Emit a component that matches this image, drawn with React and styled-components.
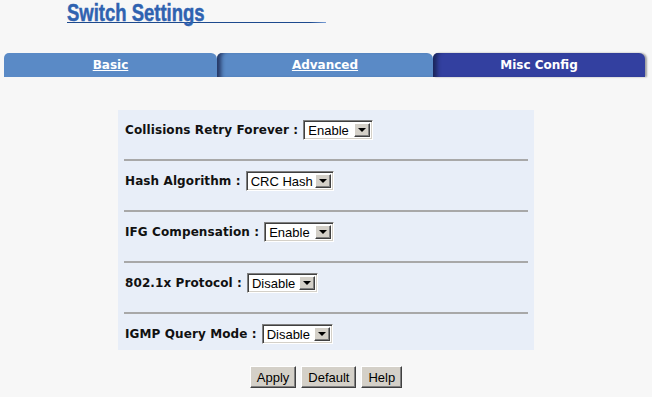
import React from "react";
import styled, { createGlobalStyle } from "styled-components";

const GlobalStyle = createGlobalStyle`
  body {
    margin: 0;
    background: #f7f7f7;
  }
`;

const Page = styled.div`
  width: 652px;
  padding-top: 2px;
`;

const TitleWrap = styled.div`
  margin-left: 67px;
  width: 259px;
  height: 21px;
  background: linear-gradient(to right, #1d4a8e 0%, #1d4a8e 94%, #7a9fd8 100%) bottom / 100% 1px no-repeat;
`;

const Title = styled.h1`
  margin: 0;
  font-family: "Liberation Sans", Arial, sans-serif;
  font-weight: bold;
  font-size: 24px;
  line-height: 21px;
  color: #2f62b0;
  transform: scaleX(0.77);
  transform-origin: left center;
  -webkit-text-stroke: 0.5px #2f62b0;
`;

const TabBar = styled.div`
  display: grid;
  grid-template-columns: 213px 216px 212px;
  margin: 30px 0 0 4px;
`;

const Tab = styled.div`
  height: 24px;
  display: flex;
  align-items: center;
  justify-content: center;
  background: ${(p) => (p.$active ? "#3340a0" : "#5a8ac6")};
  border-radius: 5px 6px 0 0;
  font-family: "DejaVu Sans", Verdana, sans-serif;
  font-weight: bold;
  font-size: 12px;
  color: #fff;
  text-decoration: ${(p) => (p.$active ? "none" : "underline")};
  box-shadow: ${(p) =>
    p.$first ? "none" : "inset 7px 0 4px -3px rgba(20, 30, 70, 0.75)"};
  ${(p) => p.$last && "box-shadow: inset 7px 0 4px -3px rgba(20, 30, 70, 0.75), 2px 0 2px rgba(0,0,0,0.35);"}
`;

const Panel = styled.div`
  width: 404px;
  margin: 33px auto 0;
  padding: 10px 6px 6px 6px;
  background: #e8eef8;
`;

const Row = styled.div`
  display: flex;
  align-items: center;
  height: 20px;
  padding-left: 1px;
`;

const Label = styled.span`
  font-family: "DejaVu Sans", Verdana, sans-serif;
  font-weight: bold;
  font-size: 12px;
  letter-spacing: 0.1px;
  color: #111;
  white-space: pre;
`;

const Rule = styled.div`
  margin: 19px 0 10px;
  height: 2px;
  background: #a8a8a8;
`;

const SelectBox = styled.div`
  box-sizing: border-box;
  width: ${(p) => p.$w}px;
  height: 20px;
  margin-left: 5px;
  display: flex;
  align-items: center;
  justify-content: space-between;
  background: #fff;
  border: 1px solid;
  border-color: #808080 #ffffff #ffffff #808080;
  box-shadow: inset 1px 1px #404040, inset -1px -1px #d4d0c8;
  padding: 2px;
  font-family: "Liberation Sans", Arial, sans-serif;
  font-size: 13px;
  color: #000;
`;

const SelectText = styled.span`
  padding-left: 2px;
`;

const Arrow = styled.span`
  box-sizing: border-box;
  width: 16px;
  height: 14px;
  display: flex;
  align-items: center;
  justify-content: center;
  background: #d4d0c8;
  border: 1px solid;
  border-color: #ffffff #404040 #404040 #ffffff;
  box-shadow: inset -1px -1px #808080;

  &::after {
    content: "";
    border-left: 4px solid transparent;
    border-right: 4px solid transparent;
    border-top: 4px solid #000;
  }
`;

const Buttons = styled.div`
  display: flex;
  justify-content: center;
  gap: 5px;
  margin-top: 16px;
`;

const Button = styled.button`
  height: 22px;
  padding: 0 6px;
  background: #d4d0c8;
  border: 1px solid;
  border-color: #ffffff #404040 #404040 #ffffff;
  box-shadow: inset -1px -1px #808080;
  font-family: "Liberation Sans", Arial, sans-serif;
  font-size: 13px;
  color: #000;
  border-radius: 0;
`;

const Select = ({ value, width }) => (
  <SelectBox $w={width}>
    <SelectText>{value}</SelectText>
    <Arrow />
  </SelectBox>
);

const rows = [
  { label: "Collisions Retry Forever :", value: "Enable", width: 70 },
  { label: "Hash Algorithm :", value: "CRC Hash", width: 88 },
  { label: "IFG Compensation :", value: "Enable", width: 70 },
  { label: "802.1x Protocol :", value: "Disable", width: 71 },
  { label: "IGMP Query Mode :", value: "Disable", width: 71 },
];

export default function App() {
  return (
    <Page>
      <GlobalStyle />
      <TitleWrap>
        <Title>Switch Settings</Title>
      </TitleWrap>
      <TabBar>
        <Tab $first>Basic</Tab>
        <Tab>Advanced</Tab>
        <Tab $active $last>Misc Config</Tab>
      </TabBar>
      <Panel>
        {rows.map((r, i) => (
          <React.Fragment key={r.label}>
            {i > 0 && <Rule />}
            <Row>
              <Label>{r.label}</Label>
              <Select value={r.value} width={r.width} />
            </Row>
          </React.Fragment>
        ))}
      </Panel>
      <Buttons>
        <Button>Apply</Button>
        <Button>Default</Button>
        <Button>Help</Button>
      </Buttons>
    </Page>
  );
}
